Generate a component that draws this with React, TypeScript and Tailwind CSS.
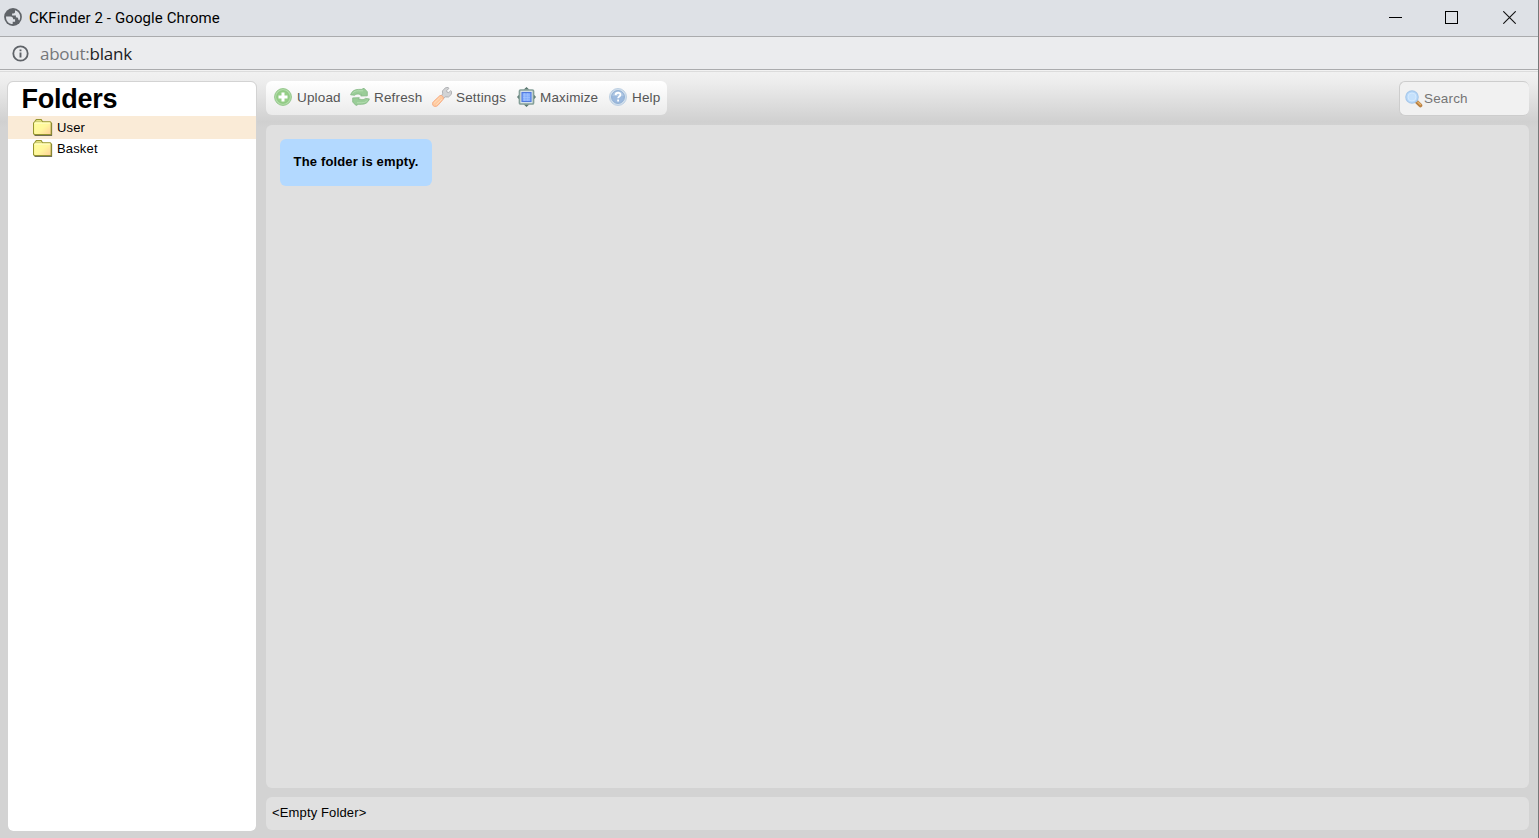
import type { ReactNode } from "react";

type ToolItem = {
  label: string;
  icon: ReactNode;
  className: string;
};

type FolderItem = {
  name: string;
  selected: boolean;
};

const folders: FolderItem[] = [
  { name: "User", selected: true },
  { name: "Basket", selected: false },
];

function GlobeIcon() {
  return (
    <svg viewBox="0 0 18 18" className="h-[18px] w-[18px] shrink-0">
      <circle cx="9" cy="9" r="8.9" fill="#5f6368" />
      <path
        d="M2 8.4h4.4c1.9 0 2.8 1.2 2.8 2.9h1.9v2.4H8.7v2.4C4.9 16 1.9 13 2 8.4ZM11 2.3c3.2.9 5.2 3.6 5.2 6.8 0 1.3-.3 2.5-.9 3.5l-.9-.9c0-1.7-.7-2.5-2.5-2.5V7.4H8.1V5.5h1.4c1 0 1.5-.7 1.5-1.7Z"
        fill="#dee1e6"
      />
    </svg>
  );
}

function InfoIcon() {
  return (
    <svg viewBox="0 0 17 17" className="h-[17px] w-[17px] shrink-0">
      <circle cx="8.5" cy="8.5" r="7.2" fill="none" stroke="#5f6368" strokeWidth="1.8" />
      <path d="M8.5 4.4v1.8M8.5 7.5v5" stroke="#5f6368" strokeWidth="1.9" />
    </svg>
  );
}

function FolderIcon() {
  return (
    <svg viewBox="0 0 20 17" className="h-[17px] w-5 shrink-0">
      <defs>
        <linearGradient id="folder" x1="0" y1="0" x2="1" y2="1">
          <stop offset="0" stopColor="#ffff9c" />
          <stop offset=".55" stopColor="#fff79c" />
          <stop offset="1" stopColor="#ffce9c" />
        </linearGradient>
      </defs>
      <path d="M1.5 16.2h17V4" fill="none" stroke="#42422a" strokeWidth="1.2" />
      <path
        d="M.5 4 2 2.3 3.3.6h4.9l1.3 2.2h7.8l.9.9v11.8H1.4l-.9-.9Z"
        fill="url(#folder)"
        stroke="#96962f"
        strokeWidth="1.1"
      />
      <path d="M1.2 4.1h16" fill="none" stroke="#ffffd6" strokeWidth=".8" />
      <path d="M2 2.6h6.8" fill="none" stroke="#bdbd68" strokeWidth=".8" />
    </svg>
  );
}

function UploadIcon() {
  return (
    <svg viewBox="0 0 18 18" className="h-[18px] w-[18px] shrink-0">
      <circle cx="9" cy="9" r="8.4" fill="#b2dca9" stroke="#94c78b" />
      <circle cx="9" cy="9" r="6.3" fill="#96cf88" stroke="#8ac47e" strokeWidth=".8" />
      <path d="M7.5 4.5h3v3h3v3h-3v3h-3v-3h-3v-3h3Z" fill="#fff" />
    </svg>
  );
}

function RefreshIcon() {
  return (
    <svg viewBox="0 0 20 18" className="h-[18px] w-5 shrink-0">
      <g fill="#9acd98" stroke="#83b783" strokeWidth=".8" strokeLinejoin="round">
        <path d="M.6 6.8C1.7 3.2 4.6 1.4 8.6 1.4h4L12.8.5h1.5l3 3.2v4.1l-6.6.2.8-1.6H9.7C7.6 5.6 6 6 4.6 7.3Z" />
        <path d="M19.4 10.9c-1.1 3.6-4 5.4-8 5.4h-4l-.2.9H5.7L2.7 14V9.9l6.6-.2-.8 1.6h1.8c2.1.8 3.7.4 5.1-.9Z" />
      </g>
      <path
        d="M2.4 5.5C3.9 3.4 6 2.7 8.6 2.8h4.6M17.5 12.2c-1.6 2-3.7 2.7-6.3 2.6H7"
        fill="none"
        stroke="#b5deb2"
        strokeWidth="1"
      />
    </svg>
  );
}

function SettingsIcon() {
  return (
    <svg viewBox="0 0 20 20" className="h-5 w-5 shrink-0">
      <path
        d="m9 9.4 1.7-2.6-.3-2.8L13.4.8l2.8-.4.7 1.2-2.3 1.9.4 1.7 1.8.3 1.9-1.8 1 .8-.4 2.9-2.8 2.6-3.2-.1-2 1.9Z"
        fill="#d2d3d5"
        stroke="#aaabaf"
        strokeWidth=".9"
      />
      <path
        d="M8 8.5Q9.6 8 10.9 9.6 12 11 11 12.5L5.9 18.4Q4.6 19.8 2.4 19.4.3 18.8.5 16.6Q.5 15.5 1.3 14.8Z"
        fill="#ffca9f"
        stroke="#f4a981"
        strokeWidth=".9"
      />
      <path d="m7.9 10.5-5.7 5.6M9.8 12.2 4.4 17.7" stroke="#ffdfc2" strokeWidth=".9" />
    </svg>
  );
}

function MaximizeIcon() {
  return (
    <svg viewBox="0 0 19 20" className="h-5 w-[19px] shrink-0">
      <path d="m9.5 0 3 2.8h-6ZM9.5 20l3-2.8h-6ZM0 10l2.7-3v6ZM19 10l-2.7-3v6Z" fill="#59766f" />
      <rect x="2.5" y="3" width="14" height="14" rx="1" fill="#e1ebeb" stroke="#849f98" strokeWidth="1.7" />
      <rect x="5" y="5.5" width="9" height="9" fill="#83aefc" stroke="#5179df" strokeWidth="1.2" />
      <path d="M6 8h7M6 10.5h7M6 13h7M7.7 6v8M10.8 6v8" stroke="#a7c7ff" strokeWidth=".6" />
    </svg>
  );
}

function HelpIcon() {
  return (
    <svg viewBox="0 0 18 18" className="h-[18px] w-[18px] shrink-0">
      <circle cx="9" cy="9" r="8.5" fill="#d0deec" stroke="#bed0e3" />
      <circle cx="9" cy="9" r="6.4" fill="#9dbade" stroke="#8fafd4" />
      <path d="M3.2 8a6 6 0 0 1 11.6 0" fill="#b0c8e3" />
      <path d="M6.6 7.1C6.7 4 11.6 4 11.4 6.9c-.1 1.7-2.3 1.5-2.3 3.4M9.1 11.6v1.8" fill="none" stroke="#fff" strokeWidth="1.8" />
    </svg>
  );
}

function SearchIcon() {
  return (
    <svg viewBox="0 0 18 18" className="h-[18px] w-[18px] shrink-0">
      <path d="m11.8 11.8 3.6 3.6" stroke="#ba8142" strokeWidth="3.8" strokeLinecap="round" />
      <path d="m12.5 11.8 3.4 3.3" stroke="#e5b16b" strokeWidth="1.4" />
      <circle cx="7" cy="7" r="6.2" fill="#b8dafa" stroke="#a8c8ea" strokeWidth="1.2" />
      <circle cx="7" cy="7" r="4" fill="#c5e1fc" stroke="#d5e9fd" strokeWidth="1" />
    </svg>
  );
}

const tools: ToolItem[] = [
  { label: "Upload", icon: <UploadIcon />, className: "w-[76px] gap-[5px]" },
  { label: "Refresh", icon: <RefreshIcon />, className: "w-[82px] gap-1" },
  { label: "Settings", icon: <SettingsIcon />, className: "w-[85px] gap-1" },
  { label: "Maximize", icon: <MaximizeIcon />, className: "w-[92px] gap-1" },
  { label: "Help", icon: <HelpIcon />, className: "gap-[5px]" },
];

function WindowHeader() {
  return (
    <header className="shrink-0">
      <div className="flex h-[37px] items-center border-b border-[#aaabad] bg-[#dee1e6] pb-[2px] pl-1">
        <GlobeIcon />
        <h1 className="ml-[7px] pt-[2px] font-[Roboto,sans-serif] text-[15px] leading-5 tracking-[0.1px] text-black">
          CKFinder 2 - Google Chrome
        </h1>
        <div className="ml-auto flex items-center">
          <button type="button" aria-label="Minimize" className="flex w-[57px] justify-center">
            <svg width="13" height="13" viewBox="0 0 13 13" shapeRendering="crispEdges">
              <path d="M0 6.5h13" stroke="#000" />
            </svg>
          </button>
          <button type="button" aria-label="Maximize window" className="flex w-[55px] justify-center">
            <svg width="13" height="13" viewBox="0 0 13 13" shapeRendering="crispEdges">
              <path d="M.5.5h12v12H.5Z" fill="none" stroke="#000" />
            </svg>
          </button>
          <button type="button" aria-label="Close" className="mr-[-1px] flex w-[60px] justify-center">
            <svg width="13" height="13" viewBox="0 0 13 13">
              <path d="m.3.3 12.4 12.4M12.7.3.3 12.7" stroke="#111" strokeWidth="1.1" />
            </svg>
          </button>
        </div>
      </div>
      <div className="flex h-[33px] items-center border-b border-[#aaabad] bg-[#ebecee] pl-3">
        <InfoIcon />
        <div className="ml-[11px] pt-px font-['Open_Sans',sans-serif] text-[17px] leading-6 tracking-[-0.24px] text-[#202124]">
          <span className="text-[#75777a]">about:</span>blank
        </div>
      </div>
    </header>
  );
}

export default function App() {
  return (
    <div className="flex h-screen w-full flex-col overflow-hidden border-r border-[#777] bg-[#d3d3d3] font-['Liberation_Sans',sans-serif] text-[13px] text-black">
      <WindowHeader />

      <div className="h-px shrink-0 bg-[#f2f2f2]" />
      <div className="flex min-h-0 flex-1 border-t border-[#dcdcdc] bg-[linear-gradient(to_bottom,#f1f1f1_0,#ededed_10px,#d0d0d0_50px,#d3d3d3_55px)] pb-[6px] pl-[7px] pr-[9px] pt-[9px]">
        <aside className="mr-[9px] w-[250px] shrink-0 overflow-hidden rounded-md border border-[#d3d3d3] bg-white bg-clip-padding">
          <h2 className="h-[34px] pl-[13.5px] text-[27px] font-bold leading-[35px] tracking-[-0.25px]">Folders</h2>
          <ul>
            {folders.map((folder) => (
              <li
                key={folder.name}
                className={
                  folder.selected
                    ? "flex h-[23px] items-center bg-[#faebd7] pl-[25px]"
                    : "flex h-[19px] items-center pl-[25px]"
                }
              >
                <FolderIcon />
                <span className="ml-1 leading-5 tracking-[0.15px]">{folder.name}</span>
              </li>
            ))}
          </ul>
        </aside>

        <main className="flex min-w-0 flex-1 flex-col pb-px">
          <div className="flex h-[35px] shrink-0 items-start justify-between">
            <div className="flex h-[34px] w-[401px] items-center rounded-md bg-linear-to-b from-white to-[#ebebeb] pb-[2px] pl-2 text-[13.5px] tracking-[0.16px] text-[#555]">
              {tools.map((tool) => (
                <button key={tool.label} type="button" className={`flex items-center ${tool.className}`}>
                  {tool.icon}
                  <span className="pt-[2px]">{tool.label}</span>
                </button>
              ))}
            </div>
            <label className="flex h-[35px] w-[130px] items-center gap-px overflow-hidden rounded-md border border-r-0 border-[#cdcdcd] bg-[#f1f1f1] pl-[5px] pt-px">
              <SearchIcon />
              <input
                type="text"
                placeholder="Search"
                className="w-[90px] bg-transparent text-[13.5px] tracking-[0.16px] outline-none placeholder:text-[#757575]"
              />
            </label>
          </div>

          <section className="mt-[9px] min-h-0 flex-1 rounded-md bg-[#e0e0e0] p-[14px]">
            <div className="flex h-[47px] w-[152px] items-center justify-center rounded-md bg-[#b3d9ff] pb-0.5 font-bold tracking-[0.15px]">
              The folder is empty.
            </div>
          </section>

          <footer className="mb-px mt-[9px] flex h-[33px] shrink-0 items-center rounded-md bg-[#e0e0e0] pb-px pl-1.5 tracking-[0.14px]">
            &lt;Empty Folder&gt;
          </footer>
        </main>
      </div>
    </div>
  );
}
